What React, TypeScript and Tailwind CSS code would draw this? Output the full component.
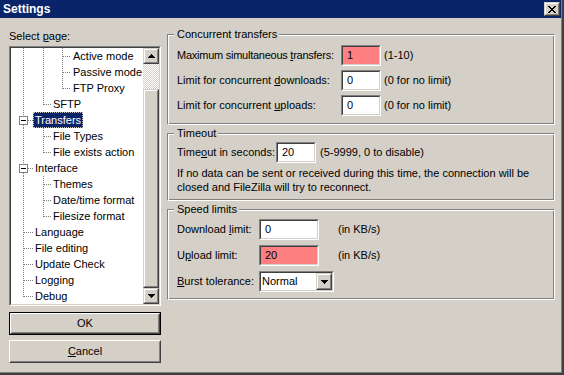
import React from "react";

type Kids = { className?: string; innerClassName?: string; children?: React.ReactNode };

function Sunken({ className = "", innerClassName = "", children }: Kids) {
  return (
    <div className={`border border-t-[#808080] border-l-[#808080] border-r-white border-b-white ${className}`}>
      <div className={`h-full w-full border border-t-[#404040] border-l-[#404040] border-r-[#d4d0c8] border-b-[#d4d0c8] ${innerClassName}`}>
        {children}
      </div>
    </div>
  );
}

function Raised({ className = "", innerClassName = "", children }: Kids) {
  return (
    <div className={`border border-t-[#d4d0c8] border-l-[#d4d0c8] border-r-[#404040] border-b-[#404040] bg-[#d4d0c8] ${className}`}>
      <div className={`flex h-full w-full items-center justify-center border border-t-white border-l-white border-r-[#808080] border-b-[#808080] ${innerClassName}`}>
        {children}
      </div>
    </div>
  );
}

const UpArrow = () => (
  <svg width="7" height="4" viewBox="0 0 7 4" shapeRendering="crispEdges">
    <rect x="3" y="0" width="1" height="1" />
    <rect x="2" y="1" width="3" height="1" />
    <rect x="1" y="2" width="5" height="1" />
    <rect x="0" y="3" width="7" height="1" />
  </svg>
);

const DownArrow = () => (
  <svg width="7" height="4" viewBox="0 0 7 4" shapeRendering="crispEdges">
    <rect x="0" y="0" width="7" height="1" />
    <rect x="1" y="1" width="5" height="1" />
    <rect x="2" y="2" width="3" height="1" />
    <rect x="3" y="3" width="1" height="1" />
  </svg>
);

const CloseGlyph = () => (
  <svg width="8" height="7" viewBox="0 0 8 7" shapeRendering="crispEdges">
    <rect x="0" y="0" width="2" height="1" />
    <rect x="6" y="0" width="2" height="1" />
    <rect x="1" y="1" width="2" height="1" />
    <rect x="5" y="1" width="2" height="1" />
    <rect x="2" y="2" width="4" height="1" />
    <rect x="3" y="3" width="2" height="1" />
    <rect x="2" y="4" width="4" height="1" />
    <rect x="1" y="5" width="2" height="1" />
    <rect x="5" y="5" width="2" height="1" />
    <rect x="0" y="6" width="2" height="1" />
    <rect x="6" y="6" width="2" height="1" />
  </svg>
);

type Row = { t: string; l: 0 | 1 | 2; pass: number[]; last: boolean; box?: boolean; sel?: boolean };

const rows: Row[] = [
  { t: "Active mode", l: 2, pass: [0, 1], last: false },
  { t: "Passive mode", l: 2, pass: [0, 1], last: false },
  { t: "FTP Proxy", l: 2, pass: [0, 1], last: true },
  { t: "SFTP", l: 1, pass: [0], last: true },
  { t: "Transfers", l: 0, pass: [], last: false, box: true, sel: true },
  { t: "File Types", l: 1, pass: [0], last: false },
  { t: "File exists action", l: 1, pass: [0], last: true },
  { t: "Interface", l: 0, pass: [], last: false, box: true },
  { t: "Themes", l: 1, pass: [0], last: false },
  { t: "Date/time format", l: 1, pass: [0], last: false },
  { t: "Filesize format", l: 1, pass: [0], last: true },
  { t: "Language", l: 0, pass: [], last: false },
  { t: "File editing", l: 0, pass: [], last: false },
  { t: "Update Check", l: 0, pass: [], last: false },
  { t: "Logging", l: 0, pass: [], last: false },
  { t: "Debug", l: 0, pass: [], last: true },
];

const LX = [12, 32, 51];
const GW = [22, 40, 60];

function Gutter({ r }: { r: Row }) {
  const x = LX[r.l];
  const w = GW[r.l];
  return (
    <svg width={w} height={16} className="shrink-0" shapeRendering="crispEdges">
      <g stroke="#808080" strokeWidth="1" strokeDasharray="1 1" fill="none">
        {r.pass.map((p) => (
          <line key={p} x1={LX[p] + 0.5} y1={0} x2={LX[p] + 0.5} y2={16} />
        ))}
        {r.box ? (
          <>
            <line x1={x + 0.5} y1={0} x2={x + 0.5} y2={4} />
            {!r.last && <line x1={x + 0.5} y1={13} x2={x + 0.5} y2={16} />}
            <line x1={x + 5} y1={8.5} x2={w} y2={8.5} />
          </>
        ) : (
          <>
            <line x1={x + 0.5} y1={0} x2={x + 0.5} y2={r.last ? 9 : 16} />
            <line x1={x + 1} y1={8.5} x2={w} y2={8.5} />
          </>
        )}
      </g>
      {r.box && (
        <g>
          <rect x={x - 3.5} y={4.5} width={8} height={8} fill="#fff" stroke="#808080" />
          <rect x={x - 2} y={8} width={5} height={1} fill="#000" />
        </g>
      )}
    </svg>
  );
}

function Group({ title, className = "", children }: { title: React.ReactNode; className?: string; children?: React.ReactNode }) {
  return (
    <fieldset
      className={`m-0 w-[388px] min-w-0 border border-t-[#808080] border-l-[#808080] border-r-white border-b-white p-0 shadow-[inset_1px_1px_0_#ffffff,inset_-1px_-1px_0_#808080] ${className}`}
    >
      <legend className="ml-[6px] bg-[#d4d0c8] pl-[3px] pr-[2px] leading-[13px]">{title}</legend>
      {children}
    </fieldset>
  );
}

function Field({ value, w, pink }: { value: string; w: string; pink?: boolean }) {
  return (
    <Sunken className={`${w} h-[21px] shrink-0`} innerClassName={`flex items-center pl-[4px] ${pink ? "bg-[#ff8080]" : "bg-white"}`}>
      {value}
    </Sunken>
  );
}

export default function App() {
  return (
    <div className="h-[375px] w-[564px] whitespace-nowrap border-b-2 border-r-2 border-[#404040] font-['Liberation_Sans',Arial,sans-serif] text-[11px] leading-[13px] text-black">
      <div className="flex h-full w-full flex-col border-b border-r border-[#808080] bg-[#d4d0c8]">
        {/* Title bar */}
        <div className="flex h-[18px] shrink-0 items-center justify-between bg-[#0a246a] pl-[3px] pr-[1px]">
          <span className="text-[12px] font-bold text-white">Settings</span>
          <Raised className="h-[14px] w-[16px]">
            <CloseGlyph />
          </Raised>
        </div>

        <div className="flex pl-[9px]">
          {/* Left column */}
          <div className="flex w-[152px] shrink-0 flex-col pt-[12px]">
            <div className="mb-[3px]">
              Select <u>p</u>age:
            </div>
            <Sunken className="h-[260px] w-[152px]" innerClassName="flex">
              <div className="flex-1 overflow-hidden bg-white">
                {rows.map((r) => (
                  <div key={r.t} className="flex h-[16px] items-center">
                    <Gutter r={r} />
                    <span
                      className={`border px-[1px] leading-[14px] ${
                        r.sel ? "border-dotted border-[#c8c4bc] bg-[#0a246a] text-white" : "border-transparent"
                      }`}
                    >
                      {r.t}
                    </span>
                  </div>
                ))}
              </div>
              <div className="flex w-[16px] shrink-0 flex-col">
                <Raised className="h-[16px] w-[16px]">
                  <UpArrow />
                </Raised>
                <div className="h-[25px] w-[16px] bg-[image:repeating-conic-gradient(#ffffff_0%_25%,#d4d0c8_0%_50%)] bg-[length:2px_2px]" />
                <Raised className="h-[199px] w-[16px]" />
                <Raised className="h-[16px] w-[16px]">
                  <DownArrow />
                </Raised>
              </div>
            </Sunken>
            <div className="mt-[6px] h-[23px] w-[152px] border border-black">
              <div className="h-full w-full border border-t-white border-l-white border-r-[#404040] border-b-[#404040]">
                <div className="flex h-full w-full items-center justify-center border border-t-[#d4d0c8] border-l-[#d4d0c8] border-r-[#808080] border-b-[#808080]">
                  OK
                </div>
              </div>
            </div>
            <div className="mt-[5px] h-[23px] w-[152px] border border-t-white border-l-white border-r-[#404040] border-b-[#404040]">
              <div className="flex h-full w-full items-center justify-center border border-t-[#d4d0c8] border-l-[#d4d0c8] border-r-[#808080] border-b-[#808080]">
                <span>
                  <u>C</u>ancel
                </span>
              </div>
            </div>
          </div>

          {/* Right column */}
          <div className="ml-[6px] flex flex-col pt-[10px]">
            <Group title="Concurrent transfers">
              <div className="flex flex-col gap-[4px] pb-[8px] pl-[9px] pt-[4px]">
                <div className="flex items-center">
                  <span className="w-[164px] shrink-0 tracking-[-0.25px]">
                    Maximum simultaneous <u>t</u>ransfers:
                  </span>
                  <Field value="1" w="w-[40px]" pink />
                  <span className="ml-[3px]">(1-10)</span>
                </div>
                <div className="flex items-center">
                  <span className="w-[164px] shrink-0">
                    Limit for concurrent <u>d</u>ownloads:
                  </span>
                  <Field value="0" w="w-[40px]" />
                  <span className="ml-[3px]">(0 for no limit)</span>
                </div>
                <div className="flex items-center">
                  <span className="w-[164px] shrink-0">
                    Limit for concurrent <u>u</u>ploads:
                  </span>
                  <Field value="0" w="w-[40px]" />
                  <span className="ml-[3px]">(0 for no limit)</span>
                </div>
              </div>
            </Group>

            <Group title="Timeout" className="mt-[2px]">
              <div className="flex flex-col pb-[6px] pl-[9px] pt-[2px]">
                <div className="flex items-center">
                  <span className="w-[99px] shrink-0">
                    Time<u>o</u>ut in seconds:
                  </span>
                  <Field value="20" w="w-[40px]" />
                  <span className="ml-[4px]">(5-9999, 0 to disable)</span>
                </div>
                <div className="mt-[3px] leading-[14px]">
                  <div>If no data can be sent or received during this time, the connection will be</div>
                  <div>closed and FileZilla will try to reconnect.</div>
                </div>
              </div>
            </Group>

            <Group title="Speed limits" className="mt-[2px]">
              <div className="flex flex-col gap-[5px] pb-[7px] pl-[9px] pt-[3px]">
                <div className="flex items-center">
                  <span className="w-[82px] shrink-0">
                    Download <u>l</u>imit:
                  </span>
                  <Field value="0" w="w-[60px]" />
                  <span className="ml-[19px]">(in KB/s)</span>
                </div>
                <div className="flex items-center">
                  <span className="w-[82px] shrink-0">
                    U<u>p</u>load limit:
                  </span>
                  <Field value="20" w="w-[60px]" pink />
                  <span className="ml-[19px]">(in KB/s)</span>
                </div>
                <div className="flex items-center">
                  <span className="w-[82px] shrink-0">
                    <u>B</u>urst tolerance:
                  </span>
                  <Sunken className="h-[21px] w-[75px] shrink-0" innerClassName="flex items-stretch bg-white">
                    <span className="flex flex-1 items-center pl-[1px]">Normal</span>
                    <Raised className="h-full w-[16px]">
                      <DownArrow />
                    </Raised>
                  </Sunken>
                </div>
              </div>
            </Group>
          </div>
        </div>
      </div>
    </div>
  );
}
